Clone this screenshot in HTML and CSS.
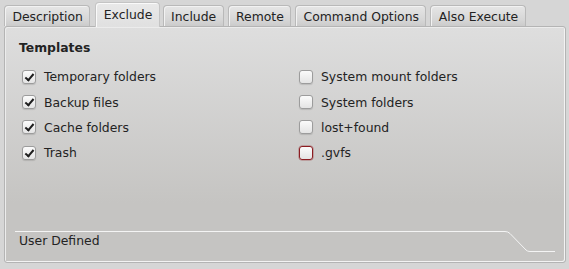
FILE: index.html
```html
<!DOCTYPE html>
<html lang="en">
<head>
    <meta charset="UTF-8">
    <title>Exclude</title>
    <link rel="stylesheet" href="styles.css">
</head>
<body>

    <div class="tabs">
        <div class="tab">Description</div>
        <div class="tab active">Exclude</div>
        <div class="tab">Include</div>
        <div class="tab">Remote</div>
        <div class="tab">Command Options</div>
        <div class="tab">Also Execute</div>
    </div>

    <div class="panel">
        <h2>Templates</h2>

        <div class="options">
            <label class="option"><span class="box checked"></span>Temporary folders</label>
            <label class="option"><span class="box"></span>System mount folders</label>
            <label class="option"><span class="box checked"></span>Backup files</label>
            <label class="option"><span class="box"></span>System folders</label>
            <label class="option"><span class="box checked"></span>Cache folders</label>
            <label class="option"><span class="box"></span>lost+found</label>
            <label class="option"><span class="box checked"></span>Trash</label>
            <label class="option"><span class="box focus"></span>.gvfs</label>
        </div>

        <div class="user-defined">
            <svg class="rule" width="541" height="22" viewBox="0 0 541 22">
                <path d="M0 0.5 H490 Q493 0.5 495 2.5 L511 19 Q512.5 20.5 515 20.5 H540" fill="none" stroke="#f4f4f4" stroke-width="1"/>
            </svg>
            User Defined
        </div>
    </div>

</body>
</html>
```

FILE: styles.css
```css
/* page */
body {
    margin: 0;
    background: #d6d6d6;
    font-family: "DejaVu Sans", sans-serif;
    font-size: 12.4px;
    color: #232323;
    height: 269px;
    display: flex;
    flex-direction: column;
}

/* tab bar */
.tabs {
    display: flex;
    align-items: flex-end;
    padding-left: 4px;
    margin-bottom: -1px;
    height: 27px;
    position: relative;
    z-index: 1;
}

.tab {
    height: 20px;
    line-height: 21px;
    padding: 0 6.4px 0 7.4px;
    margin-right: 4px;
    margin-bottom: 1px;
    border: 1px solid #b9b9b9;
    border-bottom: none;
    border-radius: 4px 4px 0 0;
    background: linear-gradient(to bottom, #e6e6e6, #d6d6d6 70%, #cbcbcb);
    box-shadow: inset 1px 1px 0 #f2f2f2;
}

.tab.active {
    height: 24px;
    line-height: 23px;
    margin-bottom: 0;
    margin-left: 1px;
    margin-right: 3px;
    background: linear-gradient(to bottom, #e9e9e9, #e0e0e0);
    border-color: #c4c4c4;
    box-shadow: inset 1px 1px 0 #fafafa;
}

/* main frame */
.panel {
    margin: 0 3px 6px 4px;
    flex: 1;
    border: 1px solid #b4b4b4;
    border-radius: 3px;
    box-shadow: inset 1px 1px 0 #ececec, inset -1px -1px 0 #f3f3f3;
    background: linear-gradient(to bottom, #dedede, #c5c4c2 75%, #c5c4c2);
    display: flex;
    flex-direction: column;
}

.panel h2 {
    margin: 13px 0 0 14px;
    font-size: 12.4px;
    line-height: 16px;
    font-weight: bold;
}

/* checkboxes */
.options {
    display: grid;
    grid-template-columns: 277px 1fr;
    grid-auto-rows: 25.4px;
    margin: 8px 0 0 17px;
}

.option {
    display: flex;
    align-items: center;
    gap: 8px;
}

.box {
    width: 12px;
    height: 12px;
    border: 1px solid #9c9c9c;
    border-radius: 3px;
    background: linear-gradient(to bottom, #fbfbfb, #e4e4e4);
    box-shadow: 0 1px 1px rgba(0, 0, 0, 0.12);
    flex: none;
    position: relative;
}

.box.checked::after {
    content: "";
    position: absolute;
    left: 4px;
    top: 1px;
    width: 3px;
    height: 7px;
    border: solid #1e1e1e;
    border-width: 0 2px 2px 0;
    transform: rotate(40deg);
}

.box.focus {
    border-color: #8c1d22;
    box-shadow: 0 0 0 0.5px rgba(140, 29, 34, 0.5);
}

/* user defined section */
.user-defined {
    margin-top: auto;
    position: relative;
    height: 31px;
    box-sizing: border-box;
    padding: 2px 0 0 14px;
    line-height: 15px;
}

.user-defined .rule {
    position: absolute;
    left: 10px;
    top: 0;
}
```
